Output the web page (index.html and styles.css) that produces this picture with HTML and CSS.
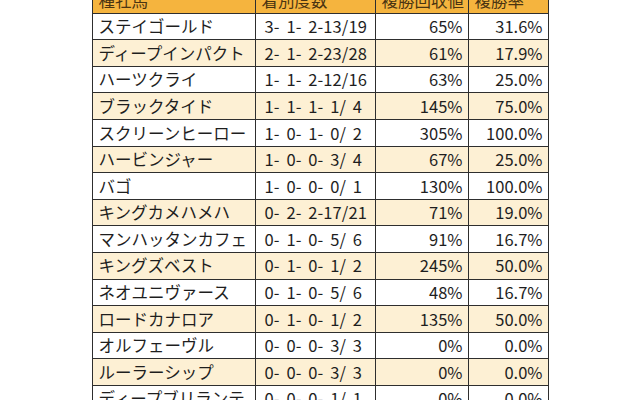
FILE: index.html
```html
<!DOCTYPE html>
<html lang="ja">
<head>
<meta charset="utf-8">
<link rel="stylesheet" href="styles.css">
</head>
<body>
<table class="stats">
<thead>
<tr><th class="c-name">種牡馬</th><th class="c-rec">着別度数</th><th class="c-ret">複勝回収値</th><th class="c-rate">複勝率</th></tr>
</thead>
<tbody>
<tr><td class="c-name">ステイゴールド</td><td class="c-rec">3- 1- 2-13/19</td><td class="c-ret">65%</td><td class="c-rate">31.6%</td></tr>
<tr><td class="c-name">ディープインパクト</td><td class="c-rec">2- 1- 2-23/28</td><td class="c-ret">61%</td><td class="c-rate">17.9%</td></tr>
<tr><td class="c-name">ハーツクライ</td><td class="c-rec">1- 1- 2-12/16</td><td class="c-ret">63%</td><td class="c-rate">25.0%</td></tr>
<tr><td class="c-name">ブラックタイド</td><td class="c-rec">1- 1- 1- 1/ 4</td><td class="c-ret">145%</td><td class="c-rate">75.0%</td></tr>
<tr><td class="c-name">スクリーンヒーロー</td><td class="c-rec">1- 0- 1- 0/ 2</td><td class="c-ret">305%</td><td class="c-rate">100.0%</td></tr>
<tr><td class="c-name">ハービンジャー</td><td class="c-rec">1- 0- 0- 3/ 4</td><td class="c-ret">67%</td><td class="c-rate">25.0%</td></tr>
<tr><td class="c-name">バゴ</td><td class="c-rec">1- 0- 0- 0/ 1</td><td class="c-ret">130%</td><td class="c-rate">100.0%</td></tr>
<tr><td class="c-name">キングカメハメハ</td><td class="c-rec">0- 2- 2-17/21</td><td class="c-ret">71%</td><td class="c-rate">19.0%</td></tr>
<tr><td class="c-name">マンハッタンカフェ</td><td class="c-rec">0- 1- 0- 5/ 6</td><td class="c-ret">91%</td><td class="c-rate">16.7%</td></tr>
<tr><td class="c-name">キングズベスト</td><td class="c-rec">0- 1- 0- 1/ 2</td><td class="c-ret">245%</td><td class="c-rate">50.0%</td></tr>
<tr><td class="c-name">ネオユニヴァース</td><td class="c-rec">0- 1- 0- 5/ 6</td><td class="c-ret">48%</td><td class="c-rate">16.7%</td></tr>
<tr><td class="c-name">ロードカナロア</td><td class="c-rec">0- 1- 0- 1/ 2</td><td class="c-ret">135%</td><td class="c-rate">50.0%</td></tr>
<tr><td class="c-name">オルフェーヴル</td><td class="c-rec">0- 0- 0- 3/ 3</td><td class="c-ret">0%</td><td class="c-rate">0.0%</td></tr>
<tr><td class="c-name">ルーラーシップ</td><td class="c-rec">0- 0- 0- 3/ 3</td><td class="c-ret">0%</td><td class="c-rate">0.0%</td></tr>
<tr><td class="c-name">ディープブリランテ</td><td class="c-rec">0- 0- 0- 1/ 1</td><td class="c-ret">0%</td><td class="c-rate">0.0%</td></tr>
</tbody>
</table>
</body>
</html>
```
FILE: styles.css
```css
html, body {
  margin: 0;
  padding: 0;
  background: #ffffff;
}
body {
  font-family: "Noto Sans CJK JP", "Noto Sans", sans-serif;
  color: #1e1e1e;
  overflow: hidden;
}
.stats {
  border-collapse: collapse;
  margin: -14px auto 0;
  table-layout: fixed;
  width: 456px;
  font-size: 16.5px;
}
.stats th, .stats td {
  border: 1.5px solid #2e2e2e;
  height: 26.6px;
  padding: 0 6px;
  line-height: 1;
  white-space: pre;
  box-sizing: border-box;
  overflow: hidden;
}
.stats th {
  background: #f5b43e;
  color: #4a3412;
  font-weight: normal;
  text-align: left;
}
.stats tbody tr:nth-child(even) td {
  background: #fdf0d4;
}
.c-name { width: 163px; text-align: left; padding-left: 5px; }
.c-rec { width: 120px; text-align: left; padding-left: 9px; }
.c-ret { width: 93px; text-align: right; }
.c-rate { width: 80px; text-align: right; }
.stats td.c-rec { padding-left: 9px; word-spacing: 3px; letter-spacing: 0.1px; }
.stats td.c-ret, .stats td.c-rate { text-align: right; padding-right: 5px; }
```
